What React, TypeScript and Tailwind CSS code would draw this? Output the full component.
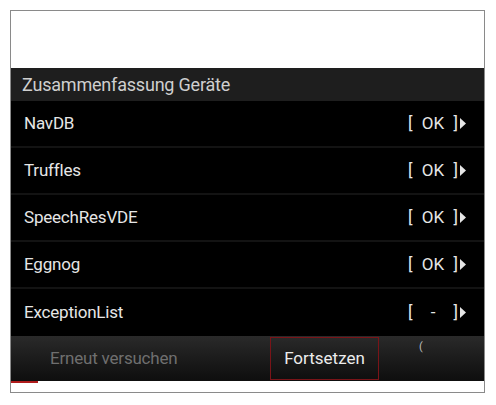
import React from "react";

const rows = [
  { name: "NavDB", status: "OK" },
  { name: "Truffles", status: "OK" },
  { name: "SpeechResVDE", status: "OK" },
  { name: "Eggnog", status: "OK" },
  { name: "ExceptionList", status: "-" },
];

function Arrow() {
  return (
    <svg width="6" height="11" viewBox="0 0 6 11" className="ml-[2px]">
      <path d="M0 0 L6 5.5 L0 11 Z" fill="#e6e6e6" />
    </svg>
  );
}

export default function App() {
  return (
    <div className="w-[496px] h-[405px] bg-white pt-[10px] pl-[10px] font-['Roboto',sans-serif]">
      <div className="w-[475px] h-[383px] border border-[#8a8a8a] bg-white flex flex-col">
        <div className="h-[57px] bg-white" />

        {/* title bar */}
        <div className="h-[33px] bg-[#1e1e1e] flex items-center pl-[11px] text-[18px] text-[#cfcfcf] tracking-[-0.2px]">
          Zusammenfassung Geräte
        </div>

        {/* list */}
        <div className="bg-black flex flex-col">
          {rows.map((r, i) => (
            <div
              key={r.name}
              className={
                "h-[47px] flex items-center justify-between pl-[13px] pr-[18px] text-[17px] text-[#e6e6e6] " +
                (i < rows.length - 1 ? "border-b-2 border-[#131313]" : "")
              }
            >
              <span className="tracking-[-0.2px]">{r.name}</span>
              <span className="flex items-center">
                <span className="w-[50px] flex justify-between">
                  <span>[</span>
                  <span>{r.status}</span>
                  <span>]</span>
                </span>
                <Arrow />
              </span>
            </div>
          ))}
        </div>

        {/* footer */}
        <div className="h-[45px] bg-gradient-to-b from-[#2a2a2a] to-[#0e0e0e] flex items-center relative">
          <span className="ml-[39px] w-[130px] text-[17px] text-[#6f6f6f] tracking-[-0.2px]">Erneut versuchen</span>
          <button className="ml-[90px] w-[109px] h-[43px] border border-[#7a1418] text-[17px] text-[#ececec] flex items-center justify-center">
            Fortsetzen
          </button>
          <span className="absolute left-[408px] top-[3px] text-[11px] text-[#bdbdbd]">(</span>
        </div>

        <div className="flex-1 bg-white">
          <div className="w-[27px] h-[2px] bg-[#b01c1c]" />
        </div>
      </div>
    </div>
  );
}
